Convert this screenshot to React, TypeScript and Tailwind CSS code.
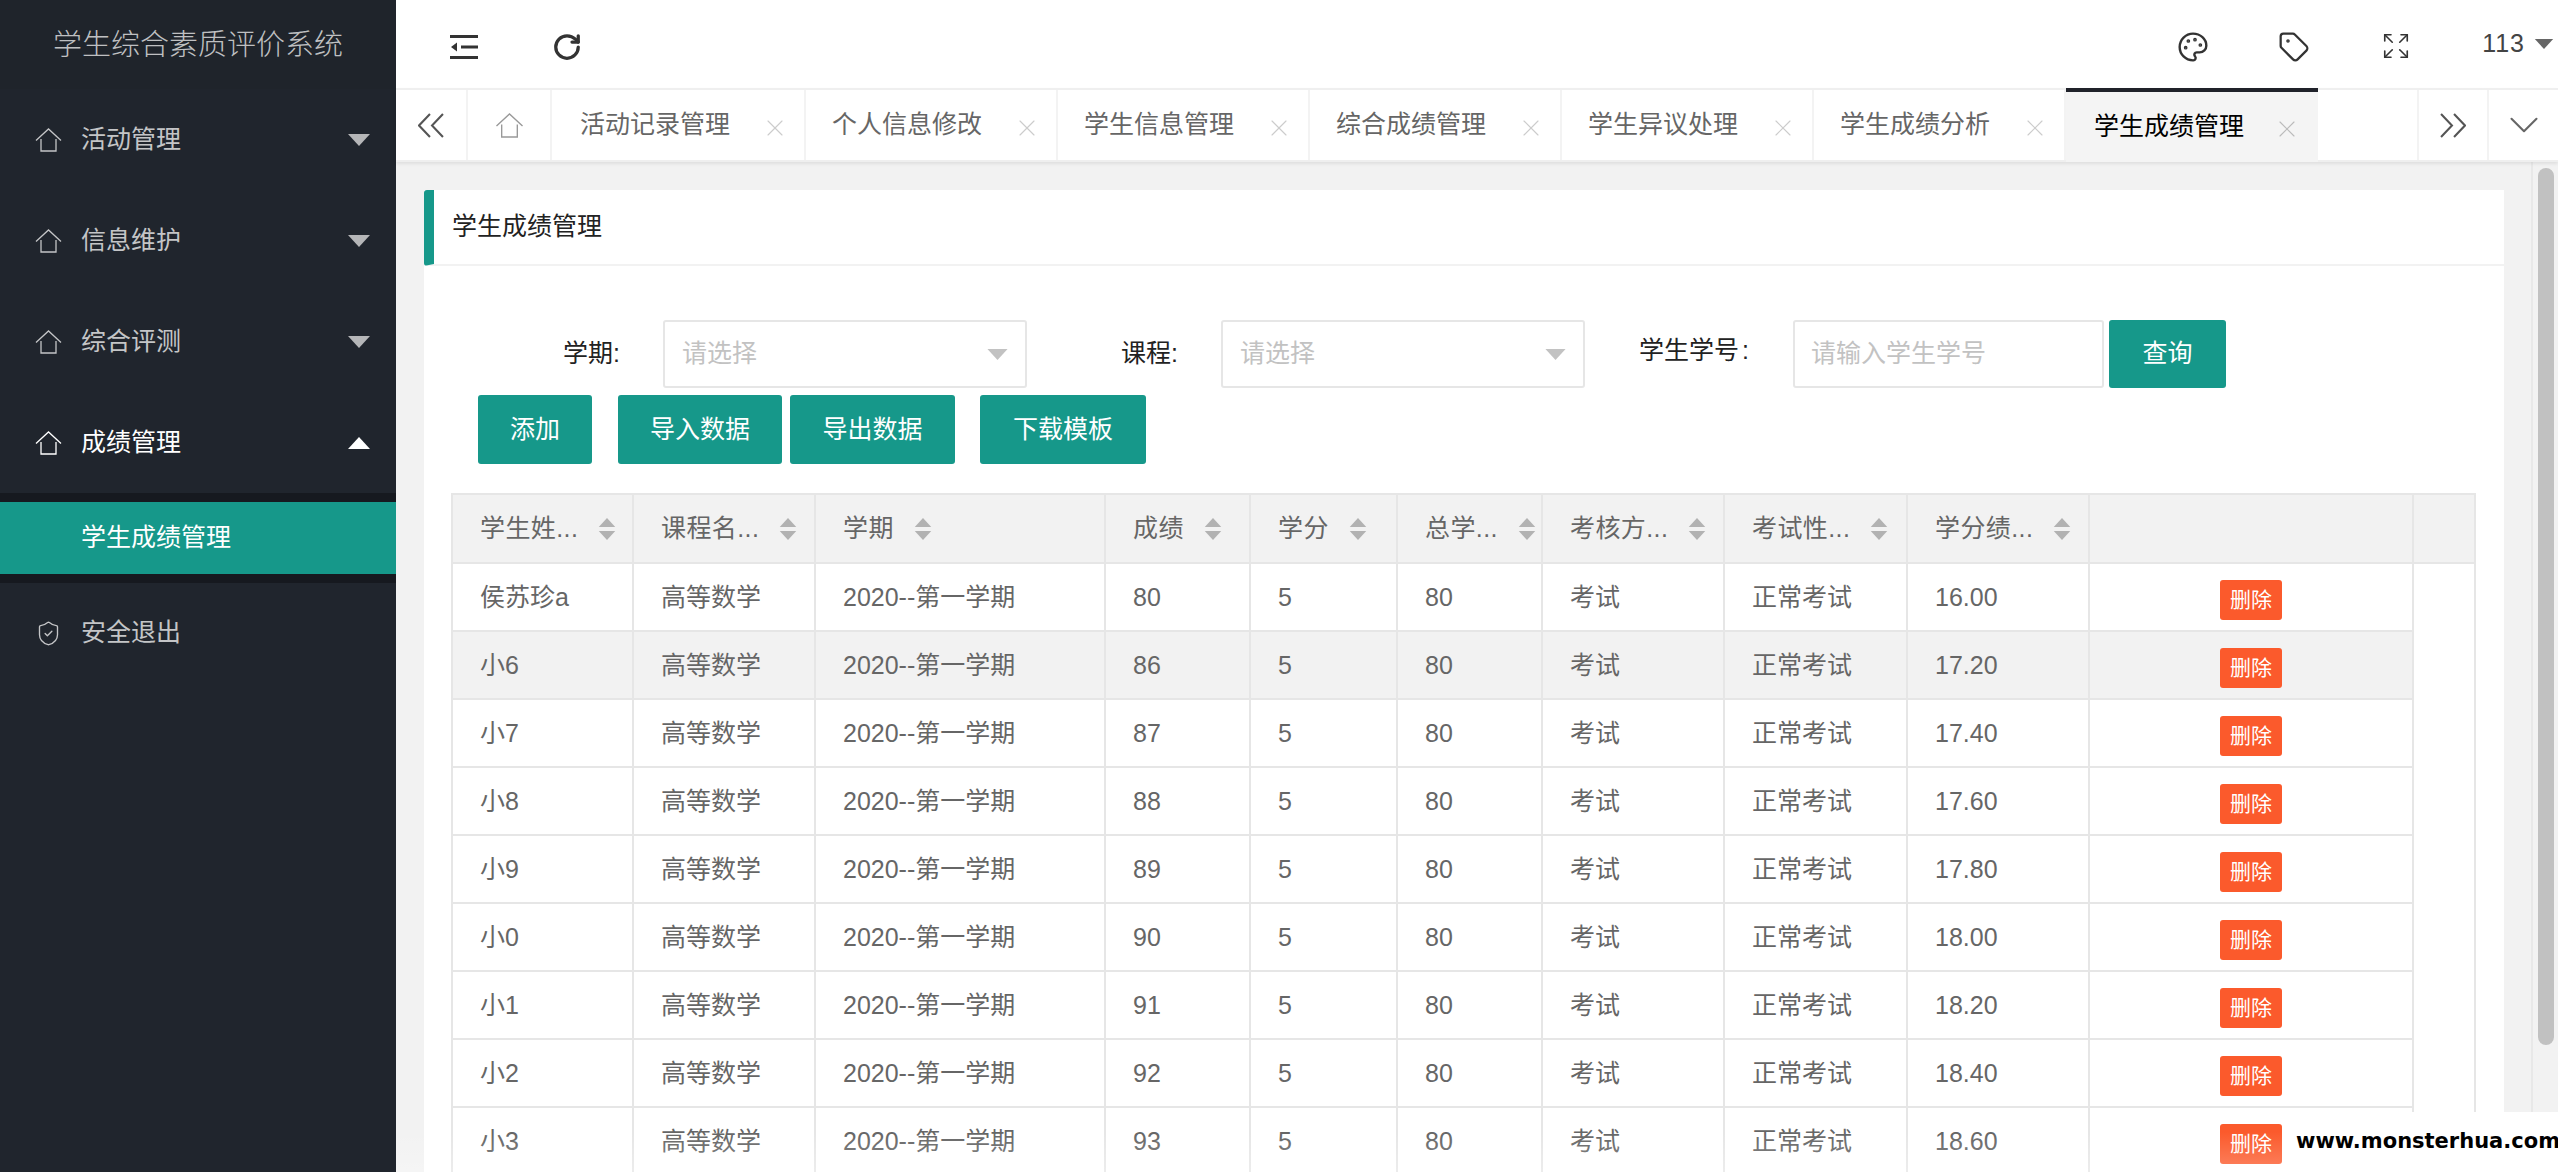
import { ChevronDown, Expand, Palette, RotateCw, ShieldCheck, Tag, X } from "lucide-react";

const fontStack = "font-['Liberation_Sans','Noto_Sans_CJK_SC',sans-serif]";

const menus = ["活动管理", "信息维护", "综合评测"];
const tabs = ["活动记录管理", "个人信息修改", "学生信息管理", "综合成绩管理", "学生异议处理", "学生成绩分析"];

const headers = ["学生姓...", "课程名...", "学期", "成绩", "学分", "总学...", "考核方...", "考试性...", "学分绩..."];

const rows = [
  ["侯苏珍a", "80", "16.00"],
  ["小6", "86", "17.20"],
  ["小7", "87", "17.40"],
  ["小8", "88", "17.60"],
  ["小9", "89", "17.80"],
  ["小0", "90", "18.00"],
  ["小1", "91", "18.20"],
  ["小2", "92", "18.40"],
  ["小3", "93", "18.60"],
];

function HomeIcon({ className }: { className: string }) {
  return (
    <svg viewBox="0 0 27 24" fill="none" stroke="currentColor" strokeWidth="1.3" className={className}>
      <path d="M1 12.5 13.5 1 26 12.5" />
      <path d="M6 11v12h15V11" />
    </svg>
  );
}

function Triangle({ up, className }: { up?: boolean; className: string }) {
  return (
    <svg viewBox="0 0 22 12" fill="currentColor" className={className}>
      <path d={up ? "M11 0 22 12H0z" : "M0 0h22L11 12z"} />
    </svg>
  );
}

function SortCaret() {
  return (
    <span className="flex flex-col gap-[4px] text-[#b2b2b2]">
      <Triangle up className="h-[9px] w-[18px]" />
      <Triangle className="h-[9px] w-[18px]" />
    </span>
  );
}

function Select() {
  return (
    <div className="flex h-[68px] w-[364px] items-center justify-between rounded-[3px] border-2 border-[#e6e6e6] pl-[17px] pr-[17px] text-[#c2c2c2]">
      <span>请选择</span>
      <Triangle className="h-[11px] w-[21px] text-[#c2c2c2]" />
    </div>
  );
}

function Sidebar() {
  return (
    <aside className="flex h-full w-[396px] shrink-0 flex-col bg-[#20252d] text-[#c4c5c7]">
      <div className="flex h-[89px] items-center justify-center bg-[#1f242b] pt-[3px] text-[29px] font-light text-[#bfc0c2]">
        学生综合素质评价系统
      </div>
      {menus.map((name) => (
        <div key={name} className="flex h-[101px] items-center pl-[35px] pr-[26px]">
          <HomeIcon className="h-[24px] w-[27px]" />
          <span className="ml-[19px]">{name}</span>
          <Triangle className="ml-auto h-[12px] w-[22px] text-[#b5b6b8]" />
        </div>
      ))}
      <div className="flex h-[101px] items-center pl-[35px] pr-[26px] text-white">
        <HomeIcon className="h-[24px] w-[27px]" />
        <span className="ml-[19px]">成绩管理</span>
        <Triangle up className="ml-auto h-[12px] w-[22px]" />
      </div>
      <div className="bg-[#16191f] py-[9px]">
        <div className="flex h-[72px] items-center bg-[#16988a] pl-[81px] text-white">学生成绩管理</div>
      </div>
      <div className="flex h-[100px] items-center pl-[35px]">
        <ShieldCheck size={27} strokeWidth={1.2} />
        <span className="ml-[19px]">安全退出</span>
      </div>
    </aside>
  );
}

function TopBar() {
  return (
    <header className="flex h-[88px] shrink-0 items-center bg-white pl-[54px] pt-[5px] text-[#333]">
      <svg viewBox="0 0 28 24" className="h-[24px] w-[28px]" fill="currentColor">
        <rect x="0" y="0" width="28" height="3" />
        <rect x="0" y="21" width="28" height="3" />
        <rect x="11" y="10.5" width="17" height="3" />
        <path d="M1 12 7 7.5v9z" />
      </svg>
      <RotateCw size={30} strokeWidth={2.6} className="ml-[74px]" />
      <Palette size={32} strokeWidth={1.8} className="ml-auto" />
      <Tag size={32} strokeWidth={1.7} className="ml-[69px]" />
      <Expand size={30} strokeWidth={1.3} className="ml-[71px] -mt-[2px]" />
      <span className="ml-[71px] -mt-[5px] tracking-[1px] text-[#444]">113</span>
      <Triangle className="ml-[9px] mr-[4px] -mt-[5px] h-[10px] w-[20px] text-[#666]" />
    </header>
  );
}

function TabBar() {
  return (
    <nav className="relative z-10 flex h-[74px] shrink-0 border-y-2 border-[#efefef] bg-white text-[#666] shadow-[0_2px_3px_rgba(0,0,0,0.08)]">
      <div className="flex w-[72px] items-center justify-center border-r-2 border-[#f3f3f3] text-[#555]">
        <svg viewBox="0 0 25 24" fill="none" stroke="currentColor" strokeWidth="2" className="h-[25px] w-[26px]">
          <path d="M11.5 1 1 12l10.5 11M24 1 13.5 12 24 23" />
        </svg>
      </div>
      <div className="flex w-[84px] items-center justify-center border-r-2 border-[#f3f3f3] text-[#999]">
        <HomeIcon className="h-[25px] w-[29px]" />
      </div>
      {tabs.map((name, i) => (
        <div
          key={name}
          className={
            i === 0
              ? "flex w-[254px] items-center border-r-2 border-[#f3f3f3] pl-[28px]"
              : "flex w-[252px] items-center border-r-2 border-[#f3f3f3] pl-[26px]"
          }
        >
          <span>{name}</span>
          <X size={28} strokeWidth={1} className="ml-[31px] mt-[6px] shrink-0 text-[#ccc]" />
        </div>
      ))}
      <div className="-mt-[2px] flex h-[74px] w-[252px] items-center border-t-4 border-[#20222a] bg-[#f4f4f4] pl-[28px] text-black">
        <span>学生成绩管理</span>
        <X size={28} strokeWidth={1} className="ml-[29px] mt-[3px] shrink-0 text-[#bbb]" />
      </div>
      <div className="ml-auto flex w-[72px] items-center justify-center border-x-2 border-[#f3f3f3] text-[#555]">
        <svg viewBox="0 0 25 24" fill="none" stroke="currentColor" strokeWidth="2" className="h-[25px] w-[26px]">
          <path d="M1 1l10.5 11L1 23M13.5 1 24 12 13.5 23" />
        </svg>
      </div>
      <div className="flex w-[69px] items-center justify-center">
        <ChevronDown size={50} strokeWidth={1} />
      </div>
    </nav>
  );
}

function ScoreTable() {
  return (
    <div className="mt-[29px] w-[2025px] border-r-2 border-t-2 border-[#e6e6e6]">
      <table className="w-full table-fixed border-collapse text-[#666]">
        <colgroup>
          <col className="w-[181px]" />
          <col className="w-[182px]" />
          <col className="w-[290px]" />
          <col className="w-[145px]" />
          <col className="w-[147px]" />
          <col className="w-[145px]" />
          <col className="w-[182px]" />
          <col className="w-[183px]" />
          <col className="w-[182px]" />
          <col className="w-[324px]" />
          <col />
        </colgroup>
        <thead>
          <tr className="h-[68px] bg-[#f2f2f2]">
            {headers.map((h) => (
              <th key={h} className="border-2 border-t-0 border-[#e6e6e6] px-[27px] text-left font-normal tracking-[0.4px]">
                <span className="flex items-center gap-5 whitespace-nowrap">
                  {h}
                  <SortCaret />
                </span>
              </th>
            ))}
            <th className="border-2 border-t-0 border-[#e6e6e6]" />
            <th className="border-y-2 border-t-0 border-[#e6e6e6]" />
          </tr>
        </thead>
        <tbody>
          {rows.map(([name, score, gpa], i) => (
            <tr key={name} className={i === 1 ? "h-[68px] bg-[#f2f2f2]" : "h-[68px]"}>
              {[name, "高等数学", "2020--第一学期", score, "5", "80", "考试", "正常考试", gpa].map((text, j) => (
                <td key={j} className="border-2 border-[#e6e6e6] px-[27px] pt-[2px]">
                  {text}
                </td>
              ))}
              <td className="border-2 border-[#e6e6e6] p-0">
                <button className="mx-auto mt-[6px] block h-[40px] w-[62px] rounded-[3px] bg-[#fb5a2c] text-[21px] text-white">
                  删除
                </button>
              </td>
            </tr>
          ))}
        </tbody>
      </table>
    </div>
  );
}

function ScoreCard() {
  return (
    <section className="w-[2080px] shrink-0 bg-white text-[#222]">
      <div className="flex h-[76px] items-center rounded-l-[3px] border-b-2 border-l-[10px] border-[#f2f2f2] border-l-[#16988a] pl-[18px]">
        学生成绩管理
      </div>
      <div className="pl-[27px]">
        <div className="mt-[54px] flex h-[68px] items-center">
          <span className="w-[169px] text-right">学期:</span>
          <div className="ml-[43px]">
            <Select />
          </div>
          <span className="w-[151px] text-right">课程:</span>
          <div className="ml-[43px]">
            <Select />
          </div>
          <span className="ml-[54px] -mt-[6px] w-[110px] whitespace-nowrap">
            学生学号<span className="ml-[3px]">:</span>
          </span>
          <div className="ml-[44px] flex h-[68px] w-[311px] items-center rounded-[3px] border-2 border-[#e6e6e6] pl-[16px] text-[#c2c2c2]">
            请输入学生学号
          </div>
          <button className="ml-[5px] h-[68px] w-[117px] rounded-[3px] bg-[#16988a] text-white">查询</button>
        </div>
        <div className="mt-[7px] flex pl-[27px] text-white">
          <button className="h-[69px] w-[114px] rounded-[3px] bg-[#16988a]">添加</button>
          <button className="ml-[26px] h-[69px] w-[164px] rounded-[3px] bg-[#16988a]">导入数据</button>
          <button className="ml-[8px] h-[69px] w-[165px] rounded-[3px] bg-[#16988a]">导出数据</button>
          <button className="ml-[25px] h-[69px] w-[166px] rounded-[3px] bg-[#16988a]">下载模板</button>
        </div>
        <ScoreTable />
      </div>
    </section>
  );
}

export default function App() {
  return (
    <div className={`relative flex h-[1172px] w-[2558px] overflow-hidden bg-[#f2f2f2] text-[25px] ${fontStack}`}>
      <Sidebar />
      <main className="flex min-w-0 flex-1 flex-col">
        <TopBar />
        <TabBar />
        <div className="flex min-h-0 flex-1">
          <div className="min-w-0 flex-1 overflow-hidden pl-[28px] pt-[28px]">
            <ScoreCard />
          </div>
          <div className="w-[27px] shrink-0 border-l-2 border-[#e8e8e8] bg-[#f2f2f2] pl-[5px] pt-[6px]">
            <div className="h-[877px] w-[16px] rounded-full bg-[#c1c1c1]" />
          </div>
        </div>
      </main>
      <div className="pointer-events-none absolute bottom-0 left-[396px] right-0 h-[40px] bg-gradient-to-b from-transparent to-white/25" />
      <div className="absolute bottom-0 right-0 flex h-[60px] w-[260px] items-center justify-center bg-white pb-[1px] font-['DejaVu_Sans'] text-[21px] font-bold text-black">
        www.monsterhua.com
      </div>
    </div>
  );
}
